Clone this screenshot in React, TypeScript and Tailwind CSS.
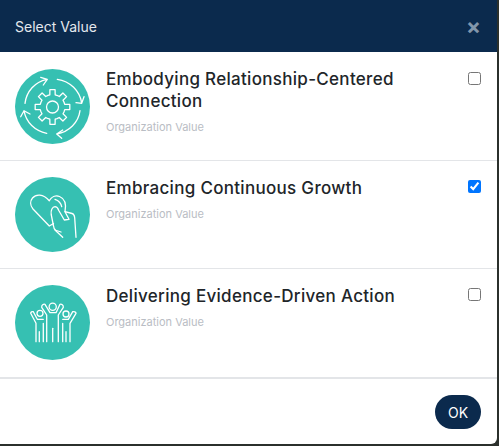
import React from 'react';

const gearPath = () => {
  const cx = 37.5;
  const cy = 38;
  const teeth = 8;
  let d = '';
  for (let i = 0; i < teeth; i++) {
    const a = (i / teeth) * Math.PI * 2 - Math.PI / 2;
    const step = Math.PI / teeth;
    const pts: [number, number][] = [
      [12.5, a - step * 0.95],
      [12.5, a - step * 0.55],
      [17.5, a - step * 0.38],
      [17.5, a + step * 0.38],
      [12.5, a + step * 0.55],
    ];
    pts.forEach(([r, t], j) => {
      const x = (cx + r * Math.cos(t)).toFixed(2);
      const y = (cy + r * Math.sin(t)).toFixed(2);
      d += `${i === 0 && j === 0 ? 'M' : 'L'}${x} ${y} `;
    });
  }
  return d + 'Z';
};

const GearIcon = () => (
  <g>
    <path d={gearPath()} strokeLinejoin="round" />
    <circle cx="37.5" cy="38" r="6" />
    <path d="M10 34.3C11.5 22 20 13 31.7 10.3M25.7 8.3L32.3 10.3L28.3 16" />
    <path d="M42.3 10.3C55 12 65 22 66.7 34.3M61 33.7L66.7 34.3L69 27.7" />
    <path d="M65 41.7C63.5 53.5 54 63 41.7 65M47.7 61L41.7 65L46.7 69.3" />
    <path d="M31.7 64.3C20 62 11 53.5 9 41.7M5.7 47.7L9 41.7L15 45" />
  </g>
);

const HeartIcon = () => (
  <g>
    <path d="M38.5 46.5L34.3 49L18 32C15 28.5 15 24 17.5 21C21 17 28 16.5 34.3 23.7C36.5 20 40.5 18 44.5 19.5C49.5 21.5 51.5 27 50 34.7" />
    <path d="M40 22.3C43.5 23.5 46 26 46.7 29.7" />
    <path d="M38.3 48L36.2 37.5C35.5 33 37.5 29.8 40 29.7C42 29.7 43 31.5 43.8 33.5L49.3 43L54 42.3L50 34.7L57 36.5C59 37 59.5 38.5 59.7 41L61 60.3" />
    <path d="M38.3 48C38.5 50.5 39.5 52.5 41 54L47.7 60.3" />
    <path d="M40 53L46 55" />
  </g>
);

const PeopleIcon = () => (
  <g>
    <circle cx="37.7" cy="21.7" r="3.6" />
    <circle cx="25" cy="28.3" r="3" />
    <circle cx="51" cy="29" r="3" />
    <path d="M31.7 56.7V30L26.7 22.3C26.5 20 28.5 18.8 30 19.3L35 27.7H41L45 19.3C46.5 18.8 48.5 20 48.3 22.3L43.3 30V56.7" />
    <path d="M37.7 43.3V56.7" />
    <path d="M21 56.7V38.3L15.7 28.3C15.7 27 17.2 26.2 18.3 26.7L22.3 34.3H28.3" />
    <path d="M55 56.7V38.3L61 28.3C61 27 59 26.2 57.7 26.7L53.3 34.3H47.7" />
    <path d="M24.3 46.7V56.7M51 46.7V56.7M28.3 38.3V56.7M47.7 38.3V56.7" />
  </g>
);

const values = [
  { title: 'Embodying Relationship-Centered Connection', icon: <GearIcon />, checked: false },
  { title: 'Embracing Continuous Growth', icon: <HeartIcon />, checked: true },
  { title: 'Delivering Evidence-Driven Action', icon: <PeopleIcon />, checked: false },
];

const App = () => {
  return (
    <div className="h-[446px] w-[499px] overflow-hidden bg-[#2b302c] font-['Inter',sans-serif]">
      <div className="flex h-[444px] w-[497px] flex-col rounded-br-md bg-white">
        <div className="flex h-[52px] items-center justify-between bg-[#0b2a4d] pl-[15px] pr-[16px]">
          <h2 className="text-[14px] text-[#e4e8ee]">Select Value</h2>
          <span className="text-[22px] font-bold leading-none text-[#8296ab]">×</span>
        </div>

        {values.map((value, i) => (
          <div
            key={value.title}
            className={`flex pl-[15px] pr-[16px] pt-[16px] ${
              i === 0 ? 'h-[109px] pt-[17px]' : 'h-[108px]'
            } ${i < 2 ? 'border-b border-[#e3e5e8]' : ''}`}
          >
            <svg
              width="75"
              height="75"
              viewBox="0 0 75 75"
              fill="none"
              stroke="white"
              strokeWidth="1.3"
              strokeLinecap="round"
              strokeLinejoin="round"
              className="shrink-0"
            >
              <circle cx="37.5" cy="37.5" r="37.5" fill="#36c0b2" stroke="none" />
              {value.icon}
            </svg>
            <div className={`ml-[16px] w-[330px] ${i === 0 ? '-mt-[1px]' : ''}`}>
              <h3 className="text-[17px] font-[450] leading-[22px] tracking-[0.3px] text-[#212529]">
                {value.title}
              </h3>
              <p className="mt-[8px] text-[11px] leading-[14px] text-[#b9bdc4]">
                Organization Value
              </p>
            </div>
            <input type="checkbox" defaultChecked={value.checked} className="mt-[3px] ml-auto h-[13px] w-[13px]" />
          </div>
        ))}

        <div className="flex flex-1 items-start justify-end border-t-2 border-[#e3e5e8] pr-[16px] pt-[16px]">
          <button className="h-[34px] w-[46px] rounded-full bg-[#0b2a4d] text-[14px] text-white">OK</button>
        </div>
      </div>
    </div>
  );
};

export default App;
